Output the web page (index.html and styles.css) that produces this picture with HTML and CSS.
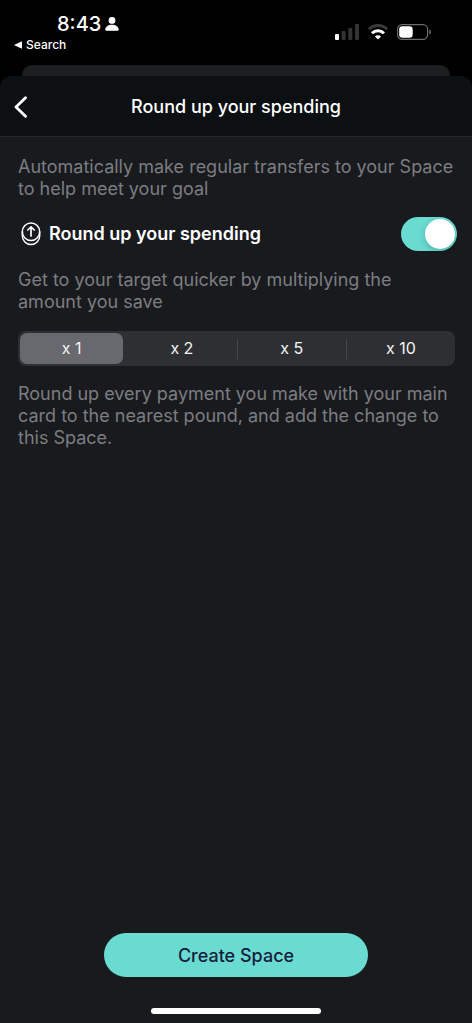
FILE: index.html
```html
<!DOCTYPE html>
<html lang="en">
<head>
<meta charset="utf-8">
<meta name="viewport" content="width=device-width, initial-scale=1">
<title>Round up your spending</title>
<link rel="stylesheet" href="styles.css">
</head>
<body>
<div class="status">
  <div class="status-left">
    <div class="clock">8:43
      <svg width="14" height="14" viewBox="0 0 14 14" fill="currentColor" aria-hidden="true"><circle cx="7" cy="3.400" r="3.400"/><path d="M.3 12.500C.3 9.800 3.100 7.700 7 7.700s6.700 2.100 6.700 4.800c0 .8-.4 1.300-1.200 1.300H1.500c-.8 0-1.200-.5-1.200-1.300z"/></svg>
    </div>
    <a class="return" href="#"><svg width="8" height="8" viewBox="0 0 8 8" fill="currentColor" aria-hidden="true"><path d="M0 4 8 .3v7.400z"/></svg>Search</a>
  </div>
  <div class="status-right">
    <svg width="24" height="16" viewBox="0 0 24 16" aria-hidden="true"><rect y="10" width="4" height="6" rx="1" fill="#fff"/><g fill="#333"><rect x="6.700" y="7" width="4" height="9" rx="1"/><rect x="13.300" y="4" width="4" height="12" rx="1"/><rect x="20" width="4" height="16" rx="1"/></g></svg>
    <svg width="20" height="16" viewBox="0 0 20 16" aria-hidden="true"><path d="M1 5.200c5-5 13-5 18 0" fill="none" stroke="#3a3a3a" stroke-width="3"/><path d="M4 9.200c3.400-3.400 8.600-3.400 12 0" fill="none" stroke="#fff" stroke-width="3"/><path d="M6.900 12.500c1.800-1.800 4.400-1.800 6.200 0L10 15.600z" fill="#fff"/></svg>
    <svg width="35" height="16" viewBox="0 0 35 16" aria-hidden="true"><rect x=".6" y=".6" width="30" height="14.800" rx="4.600" fill="none" stroke="#6c6c6c" stroke-width="1.200"/><rect x="2.200" y="2.200" width="13.500" height="11.600" rx="3.200" fill="#fff"/><path d="M32.300 5.500c2.300.8 2.300 4.200 0 5z" fill="#6c6c6c"/></svg>
  </div>
</div>
<div class="behind"></div>
<main class="sheet">
  <header class="bar">
    <button class="back" type="button" aria-label="Back"><svg width="14" height="22" viewBox="0 0 14 22" fill="none" stroke="currentColor" stroke-width="2.800" stroke-linecap="round" stroke-linejoin="round" aria-hidden="true"><path d="M11.500 1.700 2 11l9.500 9.300"/></svg></button>
    <h1 class="title">Round up your spending</h1>
  </header>
  <div class="content">
    <p class="text">Automatically make regular transfers to your Space to help meet your goal</p>
    <div class="setting">
      <svg class="coin" width="20" height="24" viewBox="0 0 20 24" fill="none" stroke="currentColor" stroke-width="1.500" stroke-linecap="round" stroke-linejoin="round" aria-hidden="true"><ellipse cx="10" cy="9.700" rx="8.700" ry="8.800"/><path d="M1.300 10v3.700c0 5 3.800 8.900 8.700 8.900s8.700-3.900 8.700-8.900V10"/><path d="M10 14V5.200M6.800 8 10 4.900 13.200 8" stroke-width="1.700"/></svg>
      <label class="setting-label" for="roundup">Round up your spending</label>
      <input class="switch" id="roundup" type="checkbox" role="switch" checked>
    </div>
    <p class="text">Get to your target quicker by multiplying the amount you save</p>
    <div class="segments" role="radiogroup" aria-label="Multiplier">
      <label class="segment"><input type="radio" name="multiplier" checked><span>x 1</span></label>
      <label class="segment"><input type="radio" name="multiplier"><span>x 2</span></label>
      <label class="segment"><input type="radio" name="multiplier"><span>x 5</span></label>
      <label class="segment"><input type="radio" name="multiplier"><span>x 10</span></label>
    </div>
    <p class="text">Round up every payment you make with your main card to the nearest pound, and add the change to this Space.</p>
  </div>
  <footer class="footer">
    <button class="create" type="button">Create Space</button>
    <div class="home"></div>
  </footer>
</main>
</body>
</html>
```
FILE: styles.css
```css
* { box-sizing: border-box; }
body {
  margin: 0;
  min-height: 100vh;
  display: flex;
  flex-direction: column;
  background: #000;
  color: #fff;
  font-family: Inter, "Liberation Sans", sans-serif;
}
h1, p { margin: 0; }
button { border: 0; font-family: inherit; cursor: pointer; }
svg { display: block; }
.status {
  height: 65px;
  display: flex;
  justify-content: space-between;
  padding: 12px 40px 0 14px;
}
.clock {
  display: flex;
  align-items: center;
  gap: 4px;
  padding-left: 43px;
  font-size: 20px;
  line-height: 24px;
  font-weight: 500;
}
.return {
  display: flex;
  align-items: center;
  gap: 4px;
  color: inherit;
  font-size: 12px;
  line-height: 18px;
  font-weight: 500;
  text-decoration: none;
}
.status-right { display: flex; gap: 9px; padding-top: 12px; }
.behind {
  height: 11px;
  margin: 0 22px;
  border-radius: 10px 10px 0 0;
  background: #1d1e20;
}
.sheet {
  flex: 1;
  display: flex;
  flex-direction: column;
  border-radius: 12px 12px 0 0;
  background: #191a1e;
  overflow: hidden;
}
.bar {
  height: 61px;
  display: grid;
  grid-template-columns: 42px 1fr 42px;
  align-items: center;
  padding-top: 1px;
  border-bottom: 1px solid #25262a;
  background: #0c1013;
}
.back {
  display: flex;
  padding: 8px 14px;
  background: none;
  color: inherit;
}
.title {
  font-size: 18px;
  line-height: 24px;
  font-weight: 500;
  text-align: center;
}
.content { flex: 1; padding: 19px 17px 19px 18px; }
.text {
  color: #7c7d81;
  font-size: 18px;
  line-height: 22px;
  font-weight: 400;
}
.setting {
  display: flex;
  align-items: center;
  gap: 8px;
  margin: 17px -2px 18px 3px;
}
.setting-label {
  flex: 1;
  font-size: 18px;
  line-height: 24px;
  font-weight: 600;
}
.switch {
  appearance: none;
  display: flex;
  width: 56px;
  height: 34px;
  margin: 0;
  padding: 2px;
  border-radius: 17px;
  background: #39393d;
  cursor: pointer;
}
.switch::before {
  content: "";
  width: 30px;
  height: 30px;
  border-radius: 50%;
  background: #fff;
  box-shadow: 0 2px 6px rgba(0, 0, 0, 0.2);
}
.switch:checked { justify-content: flex-end; background: #69dbd0; }
.segments {
  display: grid;
  grid-template-columns: repeat(4, 1fr);
  margin: 18px 0 17px;
  padding: 2px 0;
  border-radius: 8px;
  background: #2e2f33;
}
.segment {
  display: flex;
  align-items: center;
  cursor: pointer;
}
.segment input {
  appearance: none;
  width: 0;
  height: 0;
  margin: 0;
}
.segment span {
  flex: 1;
  margin: 0 2px;
  border-radius: 7px;
  color: #f4f4f5;
  font-size: 16px;
  line-height: 31px;
  text-align: center;
}
.segment input:checked + span { margin-right: 4px; background: #68686f; }
.segment:nth-child(n + 3)::before {
  content: "";
  width: 1px;
  height: 20px;
  background: #46474c;
}
.footer {
  display: flex;
  flex-direction: column;
  align-items: center;
  gap: 31px;
  padding-bottom: 9px;
}
.create {
  width: 56%;
  height: 44px;
  border-radius: 22px;
  background: #69dbd0;
  color: #171c3d;
  font-size: 18px;
  font-weight: 500;
}
.home {
  width: 36%;
  height: 6px;
  border-radius: 3px;
  background: #fff;
}
```
